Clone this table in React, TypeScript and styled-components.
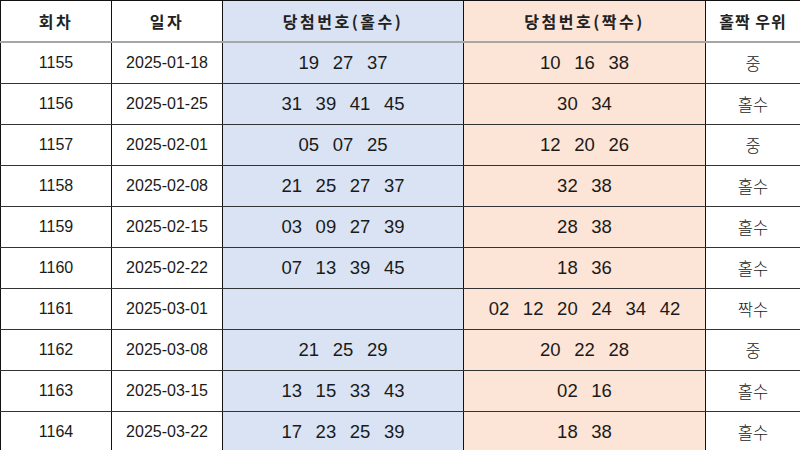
import styled, { createGlobalStyle } from "styled-components";

const GlobalStyle = createGlobalStyle`
  html, body {
    margin: 0;
    padding: 0;
    background: #ffffff;
  }
  body {
    font-family: "Liberation Sans", "Noto Sans CJK KR", sans-serif;
    color: #1a1a1a;
  }
`;

type Tone = "plain" | "odd" | "even";
type Kind = "text" | "nums" | "ko";

const bg: Record<Tone, string> = {
  plain: "#ffffff",
  odd: "#dae3f3",
  even: "#fce4d6",
};

const Table = styled.table`
  width: 800px;
  height: 450px;
  border-collapse: collapse;
  table-layout: fixed;
  border-top: 1px solid #111;
  border-left: 1px solid #111;
`;

const Col = styled.col<{ $w: number }>`
  width: ${(p) => p.$w}px;
`;

const HeadCell = styled.th<{ $tone: Tone; $tight?: boolean }>`
  height: 40px;
  background: ${(p) => bg[p.$tone]};
  border-right: 1px solid #111;
  border-bottom: 2px solid #a6a6a6;
  font-family: "Noto Sans CJK KR", "Liberation Sans", sans-serif;
  font-size: 16px;
  font-weight: 700;
  letter-spacing: ${(p) => (p.$tight ? "1px" : "2.5px")};
  color: #222;
  text-align: center;
  padding: 0;
`;

const Cell = styled.td<{ $tone: Tone; $kind: Kind }>`
  height: 40px;
  background: ${(p) => bg[p.$tone]};
  border-right: 1px solid #111;
  border-bottom: 1px solid #333;
  text-align: center;
  padding: 0;
  color: #1a1a1a;
  font-size: ${(p) =>
    p.$kind === "nums" ? "18.5px" : p.$kind === "ko" ? "16.5px" : "16px"};
  font-family: ${(p) =>
    p.$kind === "ko"
      ? `"Noto Sans CJK KR", sans-serif`
      : `"Liberation Sans", "Noto Sans CJK KR", sans-serif`};
  font-weight: ${(p) => (p.$kind === "ko" ? 300 : 400)};
  word-spacing: ${(p) => (p.$kind === "nums" ? "8.5px" : "0")};
  white-space: pre;
`;

const rows = [
  ["1155", "2025-01-18", "19 27 37", "10 16 38", "중"],
  ["1156", "2025-01-25", "31 39 41 45", "30 34", "홀수"],
  ["1157", "2025-02-01", "05 07 25", "12 20 26", "중"],
  ["1158", "2025-02-08", "21 25 27 37", "32 38", "홀수"],
  ["1159", "2025-02-15", "03 09 27 39", "28 38", "홀수"],
  ["1160", "2025-02-22", "07 13 39 45", "18 36", "홀수"],
  ["1161", "2025-03-01", "", "02 12 20 24 34 42", "짝수"],
  ["1162", "2025-03-08", "21 25 29", "20 22 28", "중"],
  ["1163", "2025-03-15", "13 15 33 43", "02 16", "홀수"],
  ["1164", "2025-03-22", "17 23 25 39", "18 38", "홀수"],
];

export default function App() {
  return (
    <>
      <GlobalStyle />
      <Table>
        <colgroup>
          <Col $w={111} />
          <Col $w={111} />
          <Col $w={241} />
          <Col $w={242} />
          <Col $w={95} />
        </colgroup>
        <thead>
          <tr>
            <HeadCell $tone="plain">회차</HeadCell>
            <HeadCell $tone="plain">일자</HeadCell>
            <HeadCell $tone="odd">당첨번호(홀수)</HeadCell>
            <HeadCell $tone="even">당첨번호(짝수)</HeadCell>
            <HeadCell $tone="plain" $tight>
              홀짝 우위
            </HeadCell>
          </tr>
        </thead>
        <tbody>
          {rows.map((r) => (
            <tr key={r[0]}>
              <Cell $tone="plain" $kind="text">{r[0]}</Cell>
              <Cell $tone="plain" $kind="text">{r[1]}</Cell>
              <Cell $tone="odd" $kind="nums">{r[2]}</Cell>
              <Cell $tone="even" $kind="nums">{r[3]}</Cell>
              <Cell $tone="plain" $kind="ko">{r[4]}</Cell>
            </tr>
          ))}
        </tbody>
      </Table>
    </>
  );
}
